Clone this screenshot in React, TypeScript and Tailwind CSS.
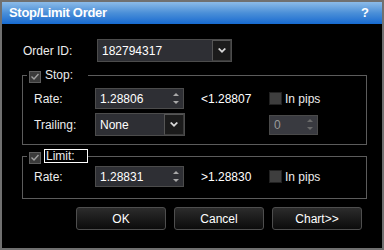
import React from "react";

function Arrow() {
  return (
    <svg width="8" height="6" viewBox="0 0 8 6" className="block">
      <path d="M0 1 L1.5 0 L4 2.5 L6.5 0 L8 1 L4 5 Z" fill="#d8d8d8" />
    </svg>
  );
}

function Combo({ value, width, btn }: { value: string; width: string; btn: string }) {
  return (
    <div className={`${width} h-[23px] flex bg-[#2e2f34] border border-[#4c4c4c]`}>
      <div className="flex-1 flex items-center pl-[4px] text-[12px] text-white">{value}</div>
      <div className={`${btn} h-full flex items-center justify-center bg-[#1b1b1b] border border-[#555] border-r-[#3a3a3a] border-b-[#3a3a3a]`}>
        <Arrow />
      </div>
    </div>
  );
}

function Spinner({ value, disabled }: { value: string; disabled?: boolean }) {
  const fill = disabled ? "#6a6a6a" : "#a8a8a8";
  return (
    <div
      className={
        disabled
          ? "w-[49px] h-[20px] flex bg-[#393a40] border border-[#4a4a4a]"
          : "w-[89px] h-[21px] flex bg-[#2e2f34] border border-[#4c4c4c]"
      }
    >
      <div
        className={`flex-1 flex items-center pl-[4px] text-[12px] ${
          disabled ? "text-[#9a9a9a]" : "text-white"
        }`}
      >
        {value}
      </div>
      <div className="w-[14px] flex flex-col items-center justify-center gap-[5px]">
        <svg width="6" height="3" viewBox="0 0 6 3" className="block">
          <path d="M0 3 L3 0 L6 3 Z" fill={fill} />
        </svg>
        <svg width="6" height="3" viewBox="0 0 6 3" className="block">
          <path d="M0 0 L6 0 L3 3 Z" fill={fill} />
        </svg>
      </div>
    </div>
  );
}

function Check({ checked }: { checked?: boolean }) {
  return (
    <div
      className={
        checked
          ? "w-[12px] h-[12px] bg-[#3a3a3a] border border-[#5c5c5c] flex items-center justify-center"
          : "w-[13px] h-[13px] bg-[#3e3e3e] border border-[#222] flex items-center justify-center"
      }
    >
      {checked && (
        <svg width="8" height="7" viewBox="0 0 8 7" className="block">
          <path d="M0.5 3.5 L3 6 L7.5 1" stroke="#a0a0a0" strokeWidth="1.4" fill="none" />
        </svg>
      )}
    </div>
  );
}

function Button({ label }: { label: string }) {
  return (
    <button className="w-[90px] h-[23px] rounded-[3px] border border-[#4e4e4e] bg-linear-to-b from-[#2c2c2c] to-[#0c0c0c] text-[12px] text-white">
      {label}
    </button>
  );
}

export default function App() {
  return (
    <div className="w-[384px] h-[250px] bg-black border-2 border-[#707070] flex flex-col font-['Liberation_Sans',Arial,sans-serif] text-[12px] text-[#ececec]">
      <div className="h-[22px] shrink-0 bg-linear-to-b from-[#8cbbe8] via-[#4a8fd8] to-[#156ad0] flex items-center justify-between pl-[7px] pr-[13px]">
        <span className="font-bold text-[13px] text-white tracking-[-0.3px]">Stop/Limit Order</span>
        <span className="font-bold text-[13px] text-white">?</span>
      </div>

      <div className="flex items-center mt-[15px]">
        <span className="ml-[21px] w-[74px]">Order ID:</span>
        <Combo value="182794317" width="w-[135px]" btn="w-[19px]" />
      </div>

      <fieldset className="ml-[20px] w-[345px] mt-[6px] border border-[#5c5c5c] pb-[8px]">
        <legend className="ml-[4px] w-[61px] h-[14px] pl-[2px] flex items-center gap-[4px]">
          <div className="mt-[3px]">
            <Check checked />
          </div>
          <span>Stop:</span>
        </legend>
        <div className="flex items-center mt-[6px] pl-[11px]">
          <span className="w-[61px]">Rate:</span>
          <Spinner value="1.28806" />
          <span className="ml-[17px] w-[68px] text-white">&lt;1.28807</span>
          <Check />
          <span className="ml-[3px]">In pips</span>
        </div>
        <div className="flex items-center mt-[4px] pl-[11px]">
          <span className="w-[61px]">Trailing:</span>
          <Combo value="None" width="w-[90px]" btn="w-[20px]" />
          <div className="ml-[84px]">
            <Spinner value="0" disabled />
          </div>
        </div>
      </fieldset>

      <fieldset className="ml-[20px] w-[345px] mt-[4px] border border-[#5c5c5c] pb-[11px]">
        <legend className="ml-[4px] w-[61px] h-[14px] pl-[2px] flex items-center gap-[3px]">
          <div className="mt-[3px]">
            <Check checked />
          </div>
          <span className="border border-white px-[1px] leading-[12px] w-[44px]">Limit:</span>
        </legend>
        <div className="flex items-center mt-[3px] pl-[11px]">
          <span className="w-[61px]">Rate:</span>
          <Spinner value="1.28831" />
          <span className="ml-[17px] w-[68px] text-white">&gt;1.28830</span>
          <Check />
          <span className="ml-[3px]">In pips</span>
        </div>
      </fieldset>

      <div className="flex justify-end gap-[8px] pr-[20px] mt-[8px]">
        <Button label="OK" />
        <Button label="Cancel" />
        <Button label="Chart>>" />
      </div>
    </div>
  );
}
